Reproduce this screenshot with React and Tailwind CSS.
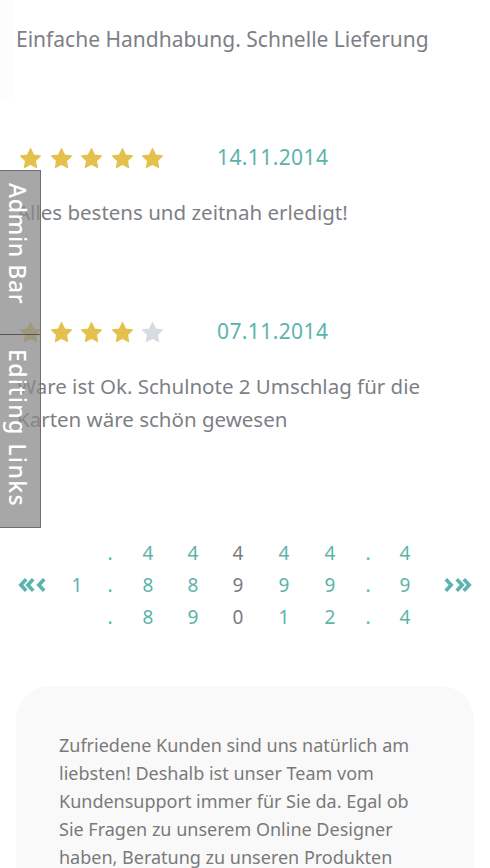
import React from "react";

const FONT = { fontFamily: '"Noto Sans", "Open Sans", sans-serif' };

function Star({ filled }) {
  return (
    <svg viewBox="0 0 24 24" className="w-[23px] h-[23px]">
      <path
        d="M12 1.8l3.1 6.6 7.1.9-5.2 5 1.3 7.1L12 17.9l-6.3 3.5 1.3-7.1-5.2-5 7.1-.9z"
        fill={filled ? "#e3c14c" : "#d7dce1"}
        stroke={filled ? "#e3c14c" : "#d7dce1"}
        strokeWidth="1.4"
        strokeLinejoin="round"
      />
    </svg>
  );
}

function Review({ stars, date, children }) {
  return (
    <div>
      <div className="flex items-center h-[30px]">
        <div className="flex gap-[7.5px] pl-[19px]">
          {[0, 1, 2, 3, 4].map((i) => (
            <Star key={i} filled={i < stars} />
          ))}
        </div>
        <span className="ml-[53px] text-[21px] text-[#5bb4ab] tracking-[0.4px]">{date}</span>
      </div>
      <p className="mt-[23px] pl-[17px] pr-3 text-[20.5px] leading-[33px] text-[#7d7f85]">{children}</p>
    </div>
  );
}

const pages = [
  { chars: [".", ".", "."], w: "w-[6px]", ml: "ml-[24px]" },
  { chars: ["4", "8", "8"], w: "w-[12px]", ml: "ml-[29px]" },
  { chars: ["4", "8", "9"], w: "w-[12px]", ml: "ml-[33px]" },
  { chars: ["4", "9", "0"], w: "w-[12px]", ml: "ml-[33px]", current: true },
  { chars: ["4", "9", "1"], w: "w-[12px]", ml: "ml-[34px]" },
  { chars: ["4", "9", "2"], w: "w-[12px]", ml: "ml-[34px]" },
  { chars: [".", ".", "."], w: "w-[6px]", ml: "ml-[29px]" },
  { chars: ["4", "9", "4"], w: "w-[12px]", ml: "ml-[28px]" },
];

function Chevrons({ dir }) {
  const left = dir === "left";
  return (
    <svg viewBox="0 0 37 14" className="w-[37px] h-[14px]">
      <g fill="none" stroke="#5bb4ab" strokeWidth="3.6" strokeLinecap="square" strokeLinejoin="miter"
        transform={left ? "" : "translate(37,0) scale(-1,1)"}>
        <path d="M7 2.5L2.8 7 7 11.5" />
        <path d="M14 2.5L9.8 7 14 11.5" />
        <path d="M25 2.5L20.8 7 25 11.5" />
      </g>
    </svg>
  );
}

export default function App() {
  return (
    <div className="relative w-[490px] h-[868px] overflow-hidden bg-white" style={FONT}>
      {/* edge of the previous card */}
      <div className="absolute -left-[40px] -top-[40px] w-[54px] h-[138px] rounded-bl-[30px] bg-[#fdfdfd]" />

      <div className="relative pt-[26px]">
        <p className="pl-4 text-[21px] leading-[26px] text-[#7d7f85]">Einfache Handhabung. Schnelle Lieferung</p>

        <div className="mt-[91px] flex flex-col gap-[88px]">
          <Review stars={5} date="14.11.2014">Alles bestens und zeitnah erledigt!</Review>
          <Review stars={4} date="07.11.2014">
            Ware ist Ok. Schulnote 2 Umschlag für die Karten wäre schön gewesen
          </Review>
        </div>

        {/* pagination */}
        <div className="mt-[101px] flex items-center pl-[18px] pr-[18px]">
          <Chevrons dir="left" />
          <span className="ml-[16px] w-[12px] text-center text-[19px] text-[#5bb4ab]">1</span>
          {pages.map((p, i) => (
            <div
              key={i}
              className={`flex flex-col items-center ${p.w} ${p.ml} text-[19px] leading-[32px] ${p.current ? "text-[#7b7c80]" : "text-[#5bb4ab]"}`}
            >
              {p.chars.map((c, j) => (
                <span key={j}>{c}</span>
              ))}
            </div>
          ))}
          <div className="flex-1" />
          <Chevrons dir="right" />
        </div>

        {/* support card */}
        <div className="mt-[53px] mx-4 rounded-[34px] bg-[#f9f9f9] pl-[43px] pr-[50px] pt-[45px] pb-10">
          <p className="text-[18px] leading-[28px] text-[#7a7a7a]">
            Zufriedene Kunden sind uns natürlich am liebsten! Deshalb ist unser Team vom Kundensupport immer für Sie da. Egal ob Sie Fragen zu unserem Online Designer haben, Beratung zu unseren Produkten benötigen oder Hilfe bei Ihrer Bestellung brauchen.
          </p>
        </div>
      </div>

      {/* admin bar tab */}
      <div className="absolute left-0 top-[170px] w-[41px] h-[358px] flex flex-col bg-[#8a8a8a]/75 border-t border-r border-b border-[#6f6f6f]">
        <div className="h-[164px] flex items-start justify-start border-b border-[#555]">
          <span className="[writing-mode:vertical-rl] text-white text-[23px] font-medium tracking-[0.6px] pt-[12px]">Admin Bar</span>
        </div>
        <div className="flex-1 flex items-start justify-start">
          <span className="[writing-mode:vertical-rl] text-white text-[23px] font-medium tracking-[1.4px] pt-[14px]">Editing Links</span>
        </div>
      </div>
    </div>
  );
}
